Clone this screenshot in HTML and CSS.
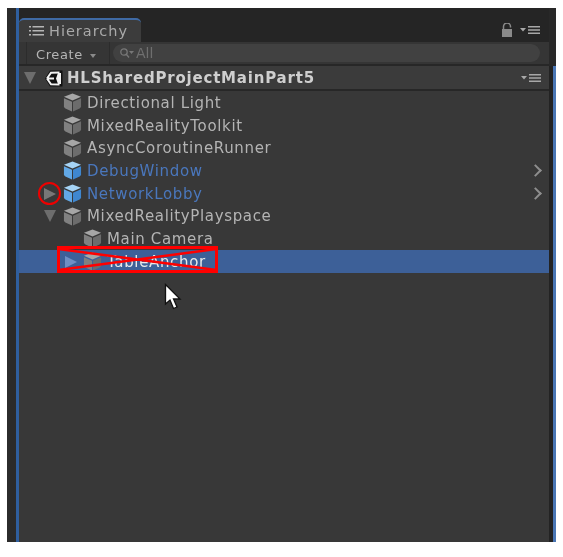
FILE: index.html
```html
<!DOCTYPE html>
<html lang="en">
<head>
  <meta charset="UTF-8" />
  <title>Hierarchy</title>
  <link rel="stylesheet" href="styles.css">
</head>
<body>
  <svg class="defs" width="0" height="0">
    <symbol id="cube" viewBox="0 0 20 20">
      <path d="M10 0.500 L19 4 L10 7.800 L1 4 Z" fill="var(--cube-top)"/>
      <path d="M1 5.500 L9.500 9.200 V19.500 L2.500 16.300 Q1 15.500 1 14 Z" fill="var(--cube-left)"/>
      <path d="M19 5.500 L10.500 9.200 V19.500 L17.500 16.300 Q19 15.500 19 14 Z" fill="var(--cube-right)"/>
    </symbol>
    <symbol id="menu" viewBox="0 0 20 10">
      <path d="M0 3 H6 L3 6.500 Z" fill="currentColor"/>
      <path d="M8 1 H20 V2.500 H8 Z M8 4.300 H20 V5.800 H8 Z M8 7.600 H20 V9.100 H8 Z" fill="currentColor"/>
    </symbol>
  </svg>

  <div class="window">
    <div class="strip"></div>
    <div class="panel">
      <div class="titlebar">
        <div class="tab">
          <svg class="tab-icon" width="16" height="12" viewBox="0 0 16 12">
            <path d="M0 1 H2 V2.500 H0 Z M0 5 H2 V6.500 H0 Z M0 9 H2 V10.500 H0 Z M3.500 1 H15 V2.500 H3.500 Z M3.500 5 H15 V6.500 H3.500 Z M3.500 9 H15 V10.500 H3.500 Z" fill="#b5b5b5"/>
          </svg>
          <span>Hierarchy</span>
        </div>
        <div class="tab-tools">
          <svg class="lock" width="12" height="14" viewBox="0 0 12 14">
            <path d="M2.500 6 V3.500 A3.300 3.300 0 0 1 9.500 3.500 V4.500" fill="none" stroke="#8a8a8a" stroke-width="1.500"/>
            <rect x="1" y="6" width="10" height="8" fill="#8a8a8a"/>
          </svg>
          <svg class="menu" width="20" height="10"><use href="#menu"/></svg>
        </div>
      </div>

      <div class="toolbar">
        <div class="create">Create <i class="caret"></i></div>
        <div class="search">
          <svg width="16" height="12" viewBox="0 0 16 12">
            <circle cx="5" cy="5" r="3.200" fill="none" stroke="#777" stroke-width="1.300"/>
            <path d="M7.500 7.500 L10 10.500" stroke="#777" stroke-width="1.300"/>
            <path d="M10 4 H15 L12.500 7 Z" fill="#777"/>
          </svg>
          <span>All</span>
        </div>
      </div>

      <div class="scene">
        <i class="arrow down"></i>
        <svg class="unity" width="18" height="17" viewBox="0 0 18 17">
          <path d="M0 8.500 L5 0.500 H17.500 V16.500 H5 Z" fill="#111"/>
          <path d="M2 8.500 H9 M2 8.500 L6 2.800 L14.500 2.500 M2 8.500 L6 14.200 L14.500 14.500" fill="none" stroke="#f2f2f2" stroke-width="2"/>
          <path d="M11 8.500 L13 3 H16 V14 H13 Z" fill="#f2f2f2"/>
        </svg>
        <b>HLSharedProjectMainPart5</b>
        <svg class="menu" width="20" height="10"><use href="#menu"/></svg>
      </div>

      <ul class="tree">
        <li class="row"><svg class="cube"><use href="#cube"/></svg>Directional Light</li>
        <li class="row"><svg class="cube"><use href="#cube"/></svg>MixedRealityToolkit</li>
        <li class="row"><svg class="cube"><use href="#cube"/></svg>AsyncCoroutineRunner</li>
        <li class="row prefab"><svg class="cube"><use href="#cube"/></svg>DebugWindow<i class="chevron"></i></li>
        <li class="row prefab"><i class="arrow right"></i><svg class="cube"><use href="#cube"/></svg>NetworkLobby<i class="chevron"></i></li>
        <li class="row"><i class="arrow down"></i><svg class="cube"><use href="#cube"/></svg>MixedRealityPlayspace</li>
        <li class="row child"><svg class="cube"><use href="#cube"/></svg>Main Camera</li>
        <li class="row child selected"><i class="arrow right"></i><svg class="cube"><use href="#cube"/></svg>TableAnchor</li>
      </ul>
    </div>
    <div class="gutter"></div>

    <!-- red marks drawn over the screenshot -->
    <div class="mark-circle"></div>
    <svg class="mark-cross" width="161" height="27" viewBox="0 0 161 27">
      <rect x="1.500" y="1.500" width="158" height="24" fill="none" stroke="#f00" stroke-width="3"/>
      <path d="M1.500 3 L159.500 24 M159.500 3 L1.500 24" stroke="#f00" stroke-width="2.500"/>
    </svg>
    <svg class="cursor" width="18" height="27" viewBox="0 0 18 27">
      <path d="M1.500 1.500 V21 L6 17 L9.500 25.500 L13 24 L9.500 16 L16 16 Z" fill="#fff" stroke="#111" stroke-width="1.300"/>
    </svg>
  </div>
</body>
</html>
```
FILE: styles.css
```css
body {
  margin: 0;
  background: #fff;
  font-family: "DejaVu Sans", sans-serif;
}
.defs {
  position: absolute;
}
.window {
  position: relative;
  display: flex;
  width: 549px;
  height: 534px;
  margin: 8px 0 0 7px;
  background: #282828;
}
.strip {
  width: 9px;
  background: #2b2b2b;
  border-right: 3px solid #2f5f9f;
}
.panel {
  display: flex;
  flex-direction: column;
  width: 530px;
  background: #383838;
  filter: blur(0.45px);
}
.gutter {
  flex: 1;
  margin-top: 58px;
  background: #232323;
  border-right: 3px solid #4a76b4;
}

.titlebar {
  display: flex;
  justify-content: space-between;
  align-items: flex-end;
  height: 34px;
  background: #252525;
}
.tab {
  display: flex;
  align-items: center;
  gap: 4px;
  width: 122px;
  height: 24px;
  padding-left: 10px;
  box-sizing: border-box;
  background: #3c3c3c;
  border-top: 2px solid #3f6aa5;
  border-radius: 5px 5px 0 0;
  font-size: 14.500px;
  letter-spacing: 1px;
  color: #a9a9a9;
}
.tab-tools {
  display: flex;
  align-items: center;
  gap: 7px;
  height: 24px;
  padding-right: 9px;
}
.menu {
  color: #a8a8a8;
}

.toolbar {
  display: flex;
  align-items: center;
  height: 24px;
  box-sizing: border-box;
  background: #353535;
  border-bottom: 2px solid #272727;
}
.create {
  width: 84px;
  height: 22px;
  margin: 0 3px 0 7px;
  padding-left: 9px;
  box-sizing: border-box;
  border: solid #2c2c2c;
  border-width: 0 1px;
  font-size: 13px;
  line-height: 25px;
  letter-spacing: 0.600px;
  color: #b5b5b5;
}
.caret {
  display: inline-block;
  margin-left: 2px;
  vertical-align: 1px;
  border: 3px solid transparent;
  border-top: 4px solid #8a8a8a;
  border-bottom: 0;
}
.search {
  display: flex;
  align-items: center;
  gap: 1px;
  width: 427px;
  height: 18px;
  padding-left: 6px;
  box-sizing: border-box;
  background: #414141;
  border-radius: 9px;
  font-size: 14px;
  color: #6f6f6f;
}

.scene {
  display: flex;
  align-items: center;
  height: 25px;
  padding: 1px 8px 0 5px;
  box-sizing: border-box;
  background: #3b3b3b;
  border-bottom: 2px solid #272727;
  font-size: 15px;
  letter-spacing: 0.800px;
  color: #cfcfcf;
}
.scene .arrow {
  margin-right: 9px;
}
.scene .unity {
  margin-right: 4px;
}
.scene b {
  flex: 1;
}

.tree {
  margin: 0;
  padding: 0;
  list-style: none;
}
.row {
  position: relative;
  display: flex;
  align-items: center;
  height: 22.700px;
  padding: 1px 0 0 44px;
  box-sizing: border-box;
  font-size: 15px;
  letter-spacing: 0.650px;
  color: #b4b4b4;
  --cube-top: #a6a6a6;
  --cube-left: #808080;
  --cube-right: #6c6c6c;
}
.row.prefab {
  color: #4a77bd;
  --cube-top: #a5d3f5;
  --cube-left: #62a8e6;
  --cube-right: #3f87cf;
}
.row.child {
  padding-left: 64px;
}
.row.selected {
  background: #3d6098;
  color: #e8e8e8;
}
.cube {
  width: 19px;
  height: 19px;
  margin-right: 5px;
}
.arrow {
  display: block;
  flex: none;
}
.row .arrow {
  position: absolute;
  left: 25px;
}
.row.child .arrow {
  left: 46px;
}
.arrow.down {
  border: 6px solid transparent;
  border-top: 12px solid #6d6d6d;
  border-bottom: 0;
}
.arrow.right {
  border: 6px solid transparent;
  border-left: 12px solid #777;
  border-right: 0;
}
.selected .arrow.right {
  border-left-color: #6f8fc4;
}
.chevron {
  position: absolute;
  right: 9px;
  top: 7px;
  width: 7px;
  height: 7px;
  border: solid #8e8e8e;
  border-width: 2px 2px 0 0;
  transform: rotate(45deg);
}

.mark-circle {
  position: absolute;
  left: 31px;
  top: 174px;
  width: 19px;
  height: 19px;
  border: 2px solid #e00;
  border-radius: 50%;
}
.mark-cross {
  position: absolute;
  left: 50px;
  top: 238px;
}
.cursor {
  position: absolute;
  left: 157px;
  top: 275px;
}
```
